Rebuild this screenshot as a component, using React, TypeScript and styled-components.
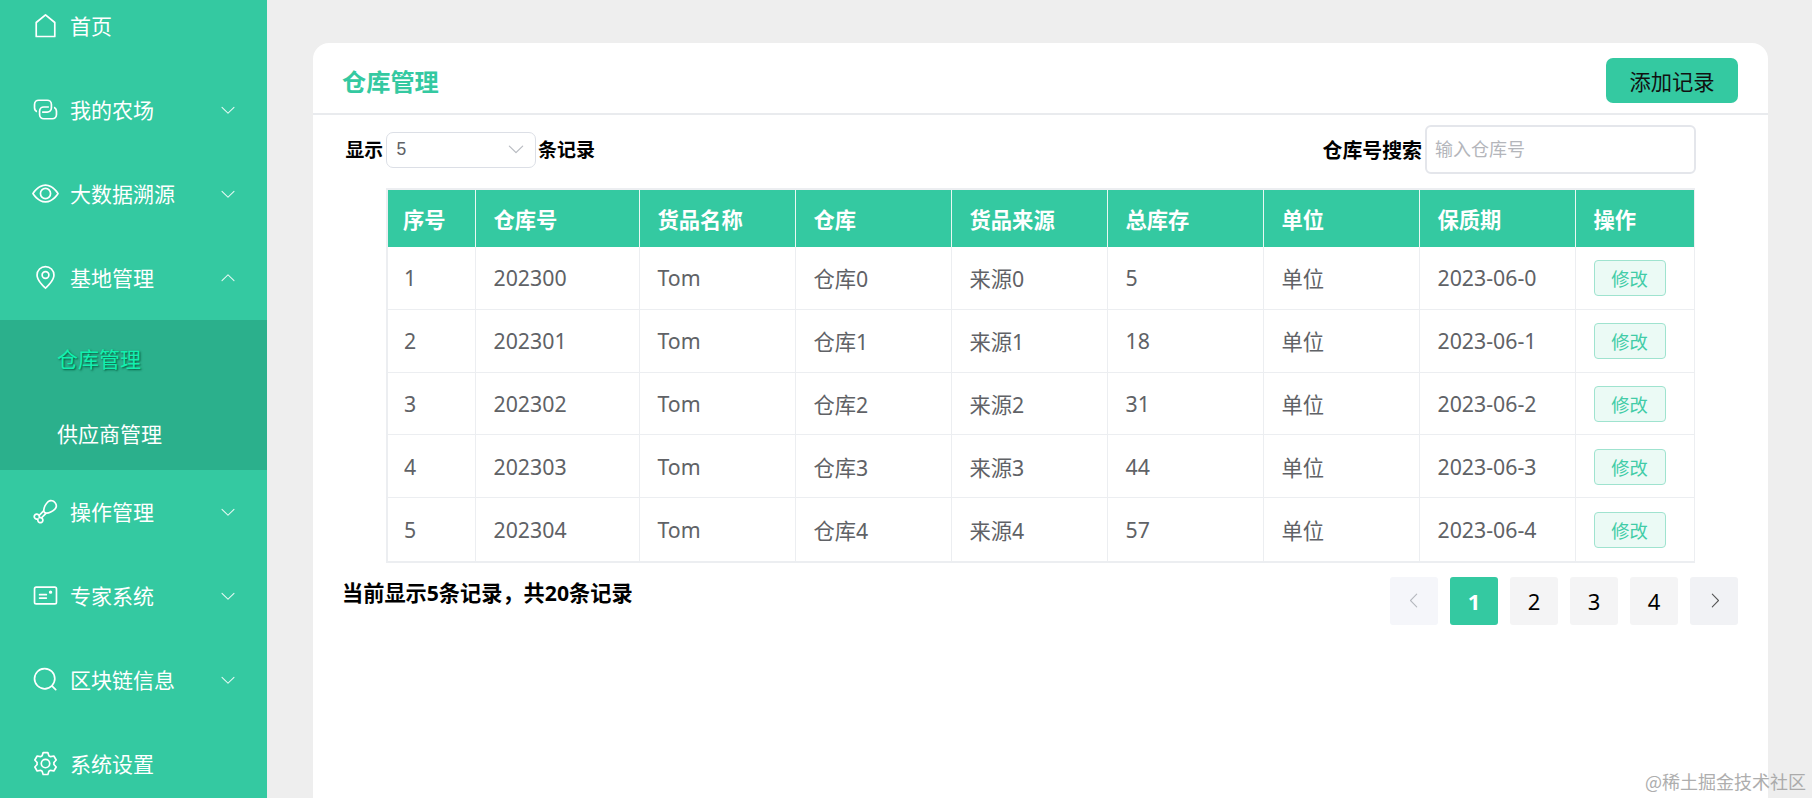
import React from "react";
import styled, { createGlobalStyle } from "styled-components";

const GREEN = "#34c9a1";
const FONT = `"Noto Sans", "Noto Sans CJK SC", sans-serif`;

const Global = createGlobalStyle`
  html, body { margin: 0; padding: 0; width: 1812px; height: 798px; overflow: hidden; background: #eeeeee; }
  * { box-sizing: border-box; }
  body { font-family: ${FONT}; }
`;

const Page = styled.div`
  position: relative;
  display: flex;
  width: 1812px;
  height: 798px;
  overflow: hidden;
`;
const Sidebar = styled.aside`
  flex: 0 0 267px;
  height: 798px;
  background: ${GREEN};
  overflow: hidden;
`;
const Menu = styled.nav`
  margin-top: -16px;
`;
const MenuItem = styled.div`
  display: flex;
  align-items: center;
  height: 84px;
  padding: 0 30.5px 2px 32px;
  color: #fff;
  font-size: 21px;
`;
const IconSlot = styled.span`
  flex: 0 0 27px;
  width: 27px;
  height: 27px;
  margin-right: 11px;
  display: flex;
  align-items: center;
  justify-content: center;
`;
const Label = styled.span`
  flex: 1;
`;
const ChevronSlot = styled.span`
  display: block;
  margin-top: 2px;
`;
const Sub = styled.div`
  background: #2bb08c;
`;
const SubItem = styled.div<{ $active?: boolean; $h: number }>`
  display: flex;
  align-items: center;
  height: ${(p) => p.$h}px;
  padding: 0 0 5px 57px;
  font-size: 21px;
  color: ${(p) => (p.$active ? "#12f0ae" : "#fff")};
  text-shadow: ${(p) => (p.$active ? "1px 1px 2px rgba(0, 80, 55, 0.9)" : "none")};
`;
const Main = styled.main`
  flex: 1;
  padding: 43px 44px 0 46px;
`;
const Card = styled.section`
  height: 800px;
  background: #fff;
  border-radius: 16px 16px 0 0;
`;
const CardHeader = styled.header`
  display: flex;
  align-items: center;
  justify-content: space-between;
  height: 72px;
  padding: 4px 30px 0 29px;
  border-bottom: 2px solid #e9ebee;
`;
const Title = styled.h1`
  margin: 0;
  font-size: 24.2px;
  font-weight: 700;
  color: ${GREEN};
`;
const AddButton = styled.button`
  width: 132px;
  height: 45px;
  border: 0;
  border-radius: 7px;
  background: ${GREEN};
  color: #111;
  font: 400 21.3px ${FONT};
  padding: 0;
`;
const Toolbar = styled.div`
  display: flex;
  align-items: center;
  justify-content: space-between;
  height: 73px;
  padding: 0 72px 5px 32.500px;
`;
const ToolGroup = styled.div<{ $gap: number }>`
  display: flex;
  align-items: center;
  gap: ${(p) => p.$gap}px;
`;
const ToolLabel = styled.span<{ $size: number }>`
  font-size: ${(p) => p.$size}px;
  font-weight: 700;
  color: #000;
`;
const Select = styled.div`
  display: flex;
  align-items: center;
  justify-content: space-between;
  width: 150px;
  height: 36px;
  margin-top: 2px;
  padding: 0 9px 2px 10px;
  border: 1px solid #dcdfe6;
  border-radius: 7px;
  font-family: "Liberation Sans", sans-serif;
  font-size: 17.5px;
  color: #606266;
`;
const Search = styled.div`
  display: flex;
  align-items: center;
  width: 271px;
  height: 49px;
  padding: 0 8px 2px;
  border: 2px solid #e4e6eb;
  border-radius: 6px;
  font-size: 18px;
  color: #b4b6bb;
`;
const TableWrap = styled.div`
  margin-left: 73px;
  width: 1308px;
`;
const Table = styled.table`
  width: 100%;
  table-layout: fixed;
  border-collapse: separate;
  border-spacing: 0;
  border: 2px solid #eceef1;
  border-right-width: 1px;
  font-size: 21.3px;
`;
const Col = styled.col<{ $w: number }>`
  width: ${(p) => p.$w}px;
`;
const Th = styled.th<{ $last?: boolean }>`
  height: 57px;
  padding: 0 0 0 17.5px;
  background: ${GREEN};
  color: #fff;
  font-weight: 700;
  text-align: left;
  border-right: ${(p) => (p.$last ? "0" : "1px solid #e8f8f3")};
  &:first-child {
    padding-left: 15px;
  }
`;
const Td = styled.td<{ $last?: boolean; $noBottom?: boolean }>`
  height: 62.8px;
  padding: 0 0 0 17.5px;
  color: #606266;
  border-right: ${(p) => (p.$last ? "0" : "1px solid #eceef1")};
  border-bottom: ${(p) => (p.$noBottom ? "0" : "1px solid #eceef1")};
  &:first-child {
    padding-left: 16px;
  }
`;
const EditButton = styled.button`
  display: block;
  width: 72px;
  height: 36px;
  margin-top: 1px;
  padding: 0;
  border: 1px solid #9fe3cf;
  border-radius: 4px;
  background: #ebfaf5;
  color: #42cca7;
  font: 400 18.3px ${FONT};
`;
const Footer = styled.div`
  display: flex;
  justify-content: space-between;
  align-items: flex-start;
  padding: 14px 30px 0 29px;
`;
const Summary = styled.div`
  font-size: 21.2px;
  font-weight: 700;
  color: #000;
  line-height: 32px;
`;
const Pager = styled.div`
  display: flex;
  gap: 12px;
`;
const PageBtn = styled.div<{ $active?: boolean; $tone?: string }>`
  display: flex;
  align-items: center;
  justify-content: center;
  width: 48px;
  height: 48px;
  border-radius: 3px;
  font-size: 22px;
  font-weight: ${(p) => (p.$active ? 700 : 400)};
  background: ${(p) => (p.$active ? GREEN : p.$tone || "#f4f4f5")};
  color: ${(p) => (p.$active ? "#fff" : "#000")};
`;
const Watermark = styled.div`
  position: absolute;
  right: 6px;
  bottom: 4px;
  font-family: "Noto Sans CJK SC", sans-serif;
  font-size: 18px;
  line-height: 26px;
  color: #a0a0a0;
  opacity: 0.85;
`;
const Glyph = styled.svg<{ $flip?: boolean }>`
  display: block;
  flex: none;
  transform: ${(p) => (p.$flip ? "rotate(180deg)" : "none")};
`;

const ARROW_DOWN =
  "M831.872 340.864 512 652.672 192.128 340.864a30.592 30.592 0 0 0-42.752 0 29.12 29.12 0 0 0 0 41.6L489.664 714.24a32 32 0 0 0 44.672 0l340.288-331.712a29.12 29.12 0 0 0 0-41.728 30.592 30.592 0 0 0-42.752 0z";
const ARROW_LEFT =
  "M609.408 149.376 277.76 489.6a32 32 0 0 0 0 44.672l331.648 340.352a29.12 29.12 0 0 0 41.728 0 30.592 30.592 0 0 0 0-42.752L339.264 512l312.128-320.064a30.592 30.592 0 0 0 0-42.56 29.12 29.12 0 0 0-41.984 0z";

const Chevron: React.FC<{ up?: boolean; color?: string; size?: number }> = ({ up, color = "#e6faf4", size = 18 }) => (
  <Glyph $flip={up} width={size} height={size} viewBox="0 0 1024 1024" fill={color}>
    <path d={ARROW_DOWN} />
  </Glyph>
);

const PageArrow: React.FC<{ right?: boolean; color: string }> = ({ right, color }) => (
  <Glyph $flip={right} width={19} height={19} viewBox="0 0 1024 1024" fill={color}>
    <path d={ARROW_LEFT} />
  </Glyph>
);

const icons: Record<string, string[]> = {
  home: [
    "M192 413.952V896h640V413.952L512 147.328 192 413.952zM139.52 374.4l352-293.312a32 32 0 0 1 40.96 0l352 293.312A32 32 0 0 1 896 398.976V928a32 32 0 0 1-32 32H160a32 32 0 0 1-32-32V398.976a32 32 0 0 1 11.52-24.576z",
  ],
  farm: [
    "M640 384v64H448a128 128 0 0 0-128 128v128a128 128 0 0 0 128 128h320a128 128 0 0 0 128-128V576a128 128 0 0 0-64-110.848V394.88c74.56 26.368 128 97.472 128 181.056v128a192 192 0 0 1-192 192H448a192 192 0 0 1-192-192V576a192 192 0 0 1 192-192h192z",
    "M384 640v-64h192a128 128 0 0 0 128-128V320a128 128 0 0 0-128-128H256a128 128 0 0 0-128 128v128a128 128 0 0 0 64 110.848v70.272A192.064 192.064 0 0 1 64 448V320a192 192 0 0 1 192-192h320a192 192 0 0 1 192 192v128a192 192 0 0 1-192 192H384z",
  ],
  eye: [
    "M512 160c320 0 512 352 512 352S832 864 512 864 0 512 0 512s192-352 512-352zm0 64c-225.28 0-384.128 208.064-436.8 288 52.608 79.872 211.456 288 436.8 288 225.28 0 384.128-208.064 436.8-288-52.608-79.872-211.456-288-436.8-288zm0 64a224 224 0 1 1 0 448 224 224 0 0 1 0-448zm0 64a160.192 160.192 0 0 0-160 160c0 88.192 71.744 160 160 160s160-71.808 160-160-71.744-160-160-160z",
  ],
  pin: [
    "M800 416a288 288 0 1 0-576 0c0 118.144 94.528 272.128 288 456.576C705.472 688.128 800 534.144 800 416zM512 960C277.312 746.688 160 565.312 160 416a352 352 0 0 1 704 0c0 149.312-117.312 330.688-352 544z",
    "M512 512a96 96 0 1 0 0-192 96 96 0 0 0 0 192zm0 64a160 160 0 1 1 0-320 160 160 0 0 1 0 320z",
  ],
  chicken: [
    "M349.952 716.992 478.72 588.16a106.688 106.688 0 0 1-26.176-19.072 106.688 106.688 0 0 1-19.072-26.176L304.704 671.744c.768 3.072 1.472 6.144 2.048 9.216l2.048 31.936 31.872 1.984c3.136.64 6.208 1.28 9.28 2.112zm57.344 33.152a128 128 0 1 1-216.32 114.432l-1.92-32-32-1.92a128 128 0 1 1 114.432-216.32L416.64 469.248c-2.432-101.44 58.112-239.104 149.056-330.048 107.328-107.328 231.296-85.504 316.8 0 85.44 85.44 107.328 209.408 0 316.8-91.008 90.88-228.672 151.424-330.112 149.056L407.296 750.08zm90.496-226.304c49.536 49.536 233.344-7.04 339.392-113.088 78.208-78.208 63.232-163.072 0-226.304-63.168-63.232-148.032-78.208-226.24 0C504.896 290.496 448.32 474.368 497.792 523.84zM244.864 708.928a64 64 0 1 0-59.84 59.84l56.32-3.52 3.52-56.32zm8.064 127.68a64 64 0 1 0 59.84-59.84l-56.32 3.52-3.52 56.32z",
  ],
  card: [
    "M160 224a32 32 0 0 0-32 32v512a32 32 0 0 0 32 32h704a32 32 0 0 0 32-32V256a32 32 0 0 0-32-32H160zm0-64h704a96 96 0 0 1 96 96v512a96 96 0 0 1-96 96H160a96 96 0 0 1-96-96V256a96 96 0 0 1 96-96z",
    "M704 320a64 64 0 1 1 0 128 64 64 0 0 1 0-128zM288 448h256q32 0 32 32t-32 32H288q-32 0-32-32t32-32zm0 128h256q32 0 32 32t-32 32H288q-32 0-32-32t32-32z",
  ],
  search: [
    "m795.904 750.72 124.992 124.928a32 32 0 0 1-45.248 45.248L750.656 795.904a416 416 0 1 1 45.248-45.248zM480 832a352 352 0 1 0 0-704 352 352 0 0 0 0 704z",
  ],
  gear: [
    "M600.704 64a32 32 0 0 1 30.464 22.208l35.2 109.376c14.784 7.232 28.928 15.36 42.432 24.512l112.384-24.192a32 32 0 0 1 34.432 15.36L944.32 364.8a32 32 0 0 1-4.032 37.504l-77.12 85.12a357.12 357.12 0 0 1 0 49.024l77.12 85.248a32 32 0 0 1 4.032 37.504l-88.704 153.6a32 32 0 0 1-34.432 15.296L708.8 803.904c-13.44 9.088-27.648 17.28-42.368 24.512l-35.264 109.376A32 32 0 0 1 600.704 960H423.296a32 32 0 0 1-30.464-22.208L357.696 828.48a351.616 351.616 0 0 1-42.56-24.64l-112.32 24.256a32 32 0 0 1-34.432-15.36L79.68 659.2a32 32 0 0 1 4.032-37.504l77.12-85.248a357.12 357.12 0 0 1 0-48.896l-77.12-85.248A32 32 0 0 1 79.68 364.8l88.704-153.6a32 32 0 0 1 34.432-15.296l112.32 24.256c13.568-9.152 27.776-17.408 42.56-24.64l35.2-109.312A32 32 0 0 1 423.232 64H600.64zm-23.424 64H446.72l-36.352 113.088-24.512 11.968a294.113 294.113 0 0 0-34.816 20.096l-22.656 15.36-116.224-25.088-65.28 113.152 79.68 88.192-1.92 27.136a293.12 293.12 0 0 0 0 40.192l1.92 27.136-79.808 88.192 65.344 113.152 116.224-25.024 22.656 15.296a294.113 294.113 0 0 0 34.816 20.096l24.512 11.968L446.72 896h130.688l36.48-113.152 24.448-11.904a288.282 288.282 0 0 0 34.752-20.096l22.592-15.296 116.288 25.024 65.28-113.152-79.744-88.192 1.92-27.136a293.12 293.12 0 0 0 0-40.256l-1.92-27.136 79.808-88.128-65.344-113.152-116.288 24.96-22.592-15.232a287.616 287.616 0 0 0-34.752-20.096l-24.448-11.904L577.344 128zM512 320a192 192 0 1 1 0 384 192 192 0 0 1 0-384zm0 64a128 128 0 1 0 0 256 128 128 0 0 0 0-256z",
  ],
};

const rows = [0, 1, 2, 3, 4].map((i) => ({
  seq: i + 1,
  no: 202300 + i,
  name: "Tom",
  wh: `仓库${i}`,
  src: `来源${i}`,
  stock: 5 + 13 * i,
  unit: "单位",
  date: `2023-06-${i}`,
}));
const columns = ["序号", "仓库号", "货品名称", "仓库", "货品来源", "总库存", "单位", "保质期", "操作"];
const widths = [88, 164, 156, 156, 156, 156, 156, 156, 118];

const Item: React.FC<{ icon: string; label: string; chevron?: "up" | "down" }> = ({ icon, label, chevron }) => (
  <MenuItem>
    <IconSlot>
      <svg width="27" height="27" viewBox="0 0 1024 1024" fill="#ffffff">
        {icons[icon].map((d) => (
          <path key={d} d={d} />
        ))}
      </svg>
    </IconSlot>
    <Label>{label}</Label>
    {chevron && (
      <ChevronSlot>
        <Chevron up={chevron === "up"} />
      </ChevronSlot>
    )}
  </MenuItem>
);

export default function App() {
  return (
    <Page>
      <Global />
      <Sidebar>
        <Menu>
          <Item icon="home" label="首页" />
          <Item icon="farm" label="我的农场" chevron="down" />
          <Item icon="eye" label="大数据溯源" chevron="down" />
          <Item icon="pin" label="基地管理" chevron="up" />
          <Sub>
            <SubItem $active $h={80}>仓库管理</SubItem>
            <SubItem $h={70}>供应商管理</SubItem>
          </Sub>
          <Item icon="chicken" label="操作管理" chevron="down" />
          <Item icon="card" label="专家系统" chevron="down" />
          <Item icon="search" label="区块链信息" chevron="down" />
          <Item icon="gear" label="系统设置" />
        </Menu>
      </Sidebar>
      <Main>
        <Card>
          <CardHeader>
            <Title>仓库管理</Title>
            <AddButton>添加记录</AddButton>
          </CardHeader>
          <Toolbar>
            <ToolGroup $gap={2.5}>
              <ToolLabel $size={18.8}>显示</ToolLabel>
              <Select>
                <span>5</span>
                <Chevron color="#b9bcc2" size={20} />
              </Select>
              <ToolLabel $size={19}>条记录</ToolLabel>
            </ToolGroup>
            <ToolGroup $gap={3}>
              <ToolLabel $size={19.9}>仓库号搜索</ToolLabel>
              <Search>输入仓库号</Search>
            </ToolGroup>
          </Toolbar>
          <TableWrap>
            <Table>
              <colgroup>
                {widths.map((w, i) => (
                  <Col key={i} $w={w} />
                ))}
              </colgroup>
              <thead>
                <tr>
                  {columns.map((c, i) => (
                    <Th key={c} $last={i === columns.length - 1}>{c}</Th>
                  ))}
                </tr>
              </thead>
              <tbody>
                {rows.map((r, ri) => {
                  const nb = ri === rows.length - 1;
                  return (
                    <tr key={r.no}>
                      <Td $noBottom={nb}>{r.seq}</Td>
                      <Td $noBottom={nb}>{r.no}</Td>
                      <Td $noBottom={nb}>{r.name}</Td>
                      <Td $noBottom={nb}>{r.wh}</Td>
                      <Td $noBottom={nb}>{r.src}</Td>
                      <Td $noBottom={nb}>{r.stock}</Td>
                      <Td $noBottom={nb}>{r.unit}</Td>
                      <Td $noBottom={nb}>{r.date}</Td>
                      <Td $noBottom={nb} $last>
                        <EditButton>修改</EditButton>
                      </Td>
                    </tr>
                  );
                })}
              </tbody>
            </Table>
          </TableWrap>
          <Footer>
            <Summary>当前显示5条记录，共20条记录</Summary>
            <Pager>
              <PageBtn $tone="#f5f6fa"><PageArrow color="#b5b8be" /></PageBtn>
              <PageBtn $active>1</PageBtn>
              <PageBtn>2</PageBtn>
              <PageBtn>3</PageBtn>
              <PageBtn>4</PageBtn>
              <PageBtn $tone="#f1f2f5"><PageArrow right color="#555" /></PageBtn>
            </Pager>
          </Footer>
        </Card>
      </Main>
      <Watermark>@稀土掘金技术社区</Watermark>
    </Page>
  );
}
